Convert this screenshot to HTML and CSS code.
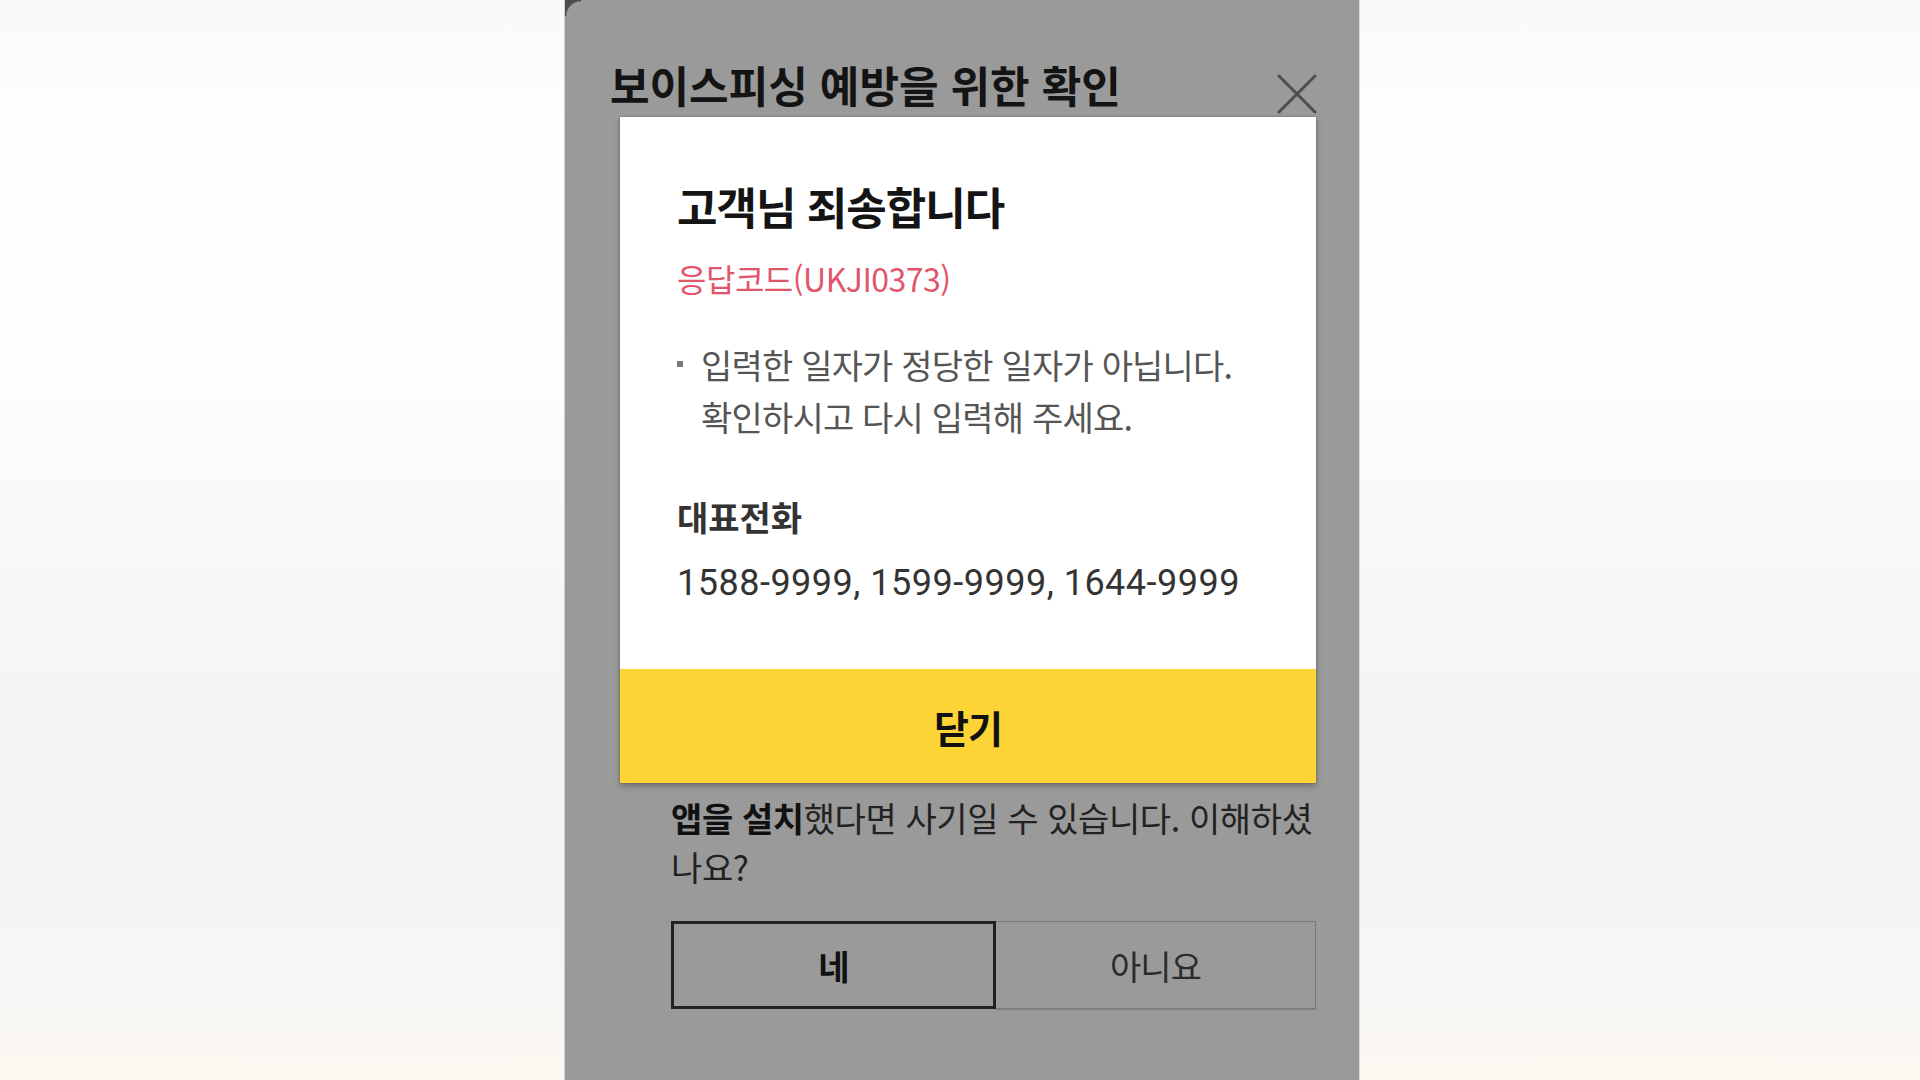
FILE: index.html
```html
<!DOCTYPE html>
<html lang="ko">
<head>
<meta charset="utf-8">
<title>보이스피싱 예방을 위한 확인</title>
<link rel="stylesheet" href="styles.css">
</head>
<body>
<div class="page">
  <section class="panel">
    <header class="panel-head">
      <h1 class="panel-title">보이스피싱 예방을 위한 확인</h1>
      <button class="close-btn" type="button" aria-label="닫기">
        <svg viewBox="0 0 42 42" width="42" height="42" aria-hidden="true">
          <path d="M3 3 L39 39 M39 3 L3 39" stroke="#4d4d4d" stroke-width="3" stroke-linecap="round" fill="none"/>
        </svg>
      </button>
    </header>

    <div class="dialog">
      <div class="dialog-body">
        <h2 class="dialog-title">고객님 죄송합니다</h2>
        <p class="dialog-code">응답코드(UKJI0373)</p>
        <p class="dialog-msg"><span>입력한 일자가 정당한 일자가 아닙니다.<br>확인하시고 다시 입력해 주세요.</span></p>
        <h3 class="dialog-sub">대표전화</h3>
        <p class="dialog-phones">1588-9999, 1599-9999, 1644-9999</p>
      </div>
      <button class="dialog-close" type="button">닫기</button>
    </div>

    <p class="question"><b>앱을 설치</b>했다면 사기일 수 있습니다. 이해하셨<br>나요?</p>

    <div class="choices">
      <button class="choice choice-yes" type="button">네</button>
      <button class="choice choice-no" type="button">아니요</button>
    </div>
  </section>
</div>
</body>
</html>
```

FILE: styles.css
```css
* { box-sizing: border-box; }

html, body {
  margin: 0;
  padding: 0;
  height: 100%;
}

body {
  font-family: "Noto Sans CJK KR", "Noto Sans", sans-serif;
  background: linear-gradient(180deg, #f9f9f9 0%, #fefefe 12%, #fdfdfd 35%, #f7f7f7 55%, #f3f3f3 72%, #f6f6f6 90%, #fcf8f1 100%);
  overflow: hidden;
}

.page {
  height: 1080px;
  display: flex;
  justify-content: flex-start;
  padding-left: 565px;
}

.panel {
  width: 794px;
  height: 1080px;
  background:
    radial-gradient(circle at 16px 16px, #9a9a9a 14px, #4c4c4c 15.5px) top left / 16px 16px no-repeat,
    #9a9a9a;
  padding: 58px 41px 0 45px;
  display: flex;
  flex-direction: column;
  box-shadow: 1px 0 0 #d8d8d8, -1px 0 0 #d0d0d0;
}

.panel-head {
  display: flex;
  justify-content: space-between;
  align-items: flex-start;
  height: 52px;
}

.panel-title {
  margin: 0;
  font-size: 43px;
  line-height: 52px;
  font-weight: 700;
  color: #141414;
  letter-spacing: 0;
}

.close-btn {
  margin: 15px 0 0 0;
  padding: 0;
  border: 0;
  background: none;
  width: 42px;
  height: 42px;
  display: block;
}

.close-btn svg { display: block; }

.dialog {
  margin: 7px 0 0 10px;
  width: 696px;
  background: #ffffff;
  display: flex;
  flex-direction: column;
  box-shadow: 0 3px 6px rgba(0, 0, 0, 0.28), 0 0 2px rgba(0, 0, 0, 0.25);
}

.dialog-body {
  padding: 61px 40px 64px 57px;
  display: flex;
  flex-direction: column;
}

.dialog-title {
  margin: 0;
  font-size: 44px;
  line-height: 56px;
  font-weight: 700;
  color: #141414;
  letter-spacing: -1px;
}

.dialog-code {
  margin: 22px 0 0;
  font-size: 32px;
  line-height: 44px;
  color: #e2566c;
  letter-spacing: -0.5px;
}

.dialog-msg {
  margin: 39px 0 0;
  display: flex;
  gap: 18px;
  font-size: 34px;
  line-height: 52px;
  color: #555555;
  letter-spacing: -0.8px;
}

.dialog-msg::before {
  content: "";
  flex: none;
  width: 6px;
  height: 6px;
  margin-top: 22px;
  background: #7a7a7a;
}

.dialog-sub {
  margin: 52px 0 0;
  font-size: 34px;
  line-height: 44px;
  font-weight: 700;
  color: #333333;
  letter-spacing: 0;
}

.dialog-phones {
  margin: 22px 0 0;
  font-family: Roboto, "Noto Sans", sans-serif;
  font-size: 36px;
  line-height: 44px;
  color: #333333;
  letter-spacing: 0.5px;
}

.dialog-close {
  display: block;
  width: 100%;
  height: 114px;
  border: 0;
  margin: 0;
  background: #fdd435;
  font-family: "Noto Sans CJK KR", sans-serif;
  font-size: 38px;
  font-weight: 700;
  color: #111111;
  letter-spacing: -1px;
}

.question {
  margin: 10px 0 0 61px;
  font-size: 34px;
  line-height: 49px;
  color: #222222;
  letter-spacing: -0.4px;
  white-space: nowrap;
}

.question b {
  font-weight: 700;
  color: #111111;
}

.choices {
  margin: 30px 0 0 61px;
  width: 645px;
  height: 88px;
  display: flex;
}

.choice {
  flex: 1 1 0;
  margin: 0;
  background: transparent;
  font-family: "Noto Sans CJK KR", sans-serif;
  font-size: 34px;
  letter-spacing: -1px;
}

.choice-yes {
  border: 3px solid #222222;
  font-weight: 700;
  color: #111111;
}

.choice-no {
  border: 1px solid #7b7b7b;
  border-left: 0;
  font-weight: 400;
  color: #2c2c2c;
  box-shadow: 0 1px 1px rgba(0, 0, 0, 0.15);
}
```
